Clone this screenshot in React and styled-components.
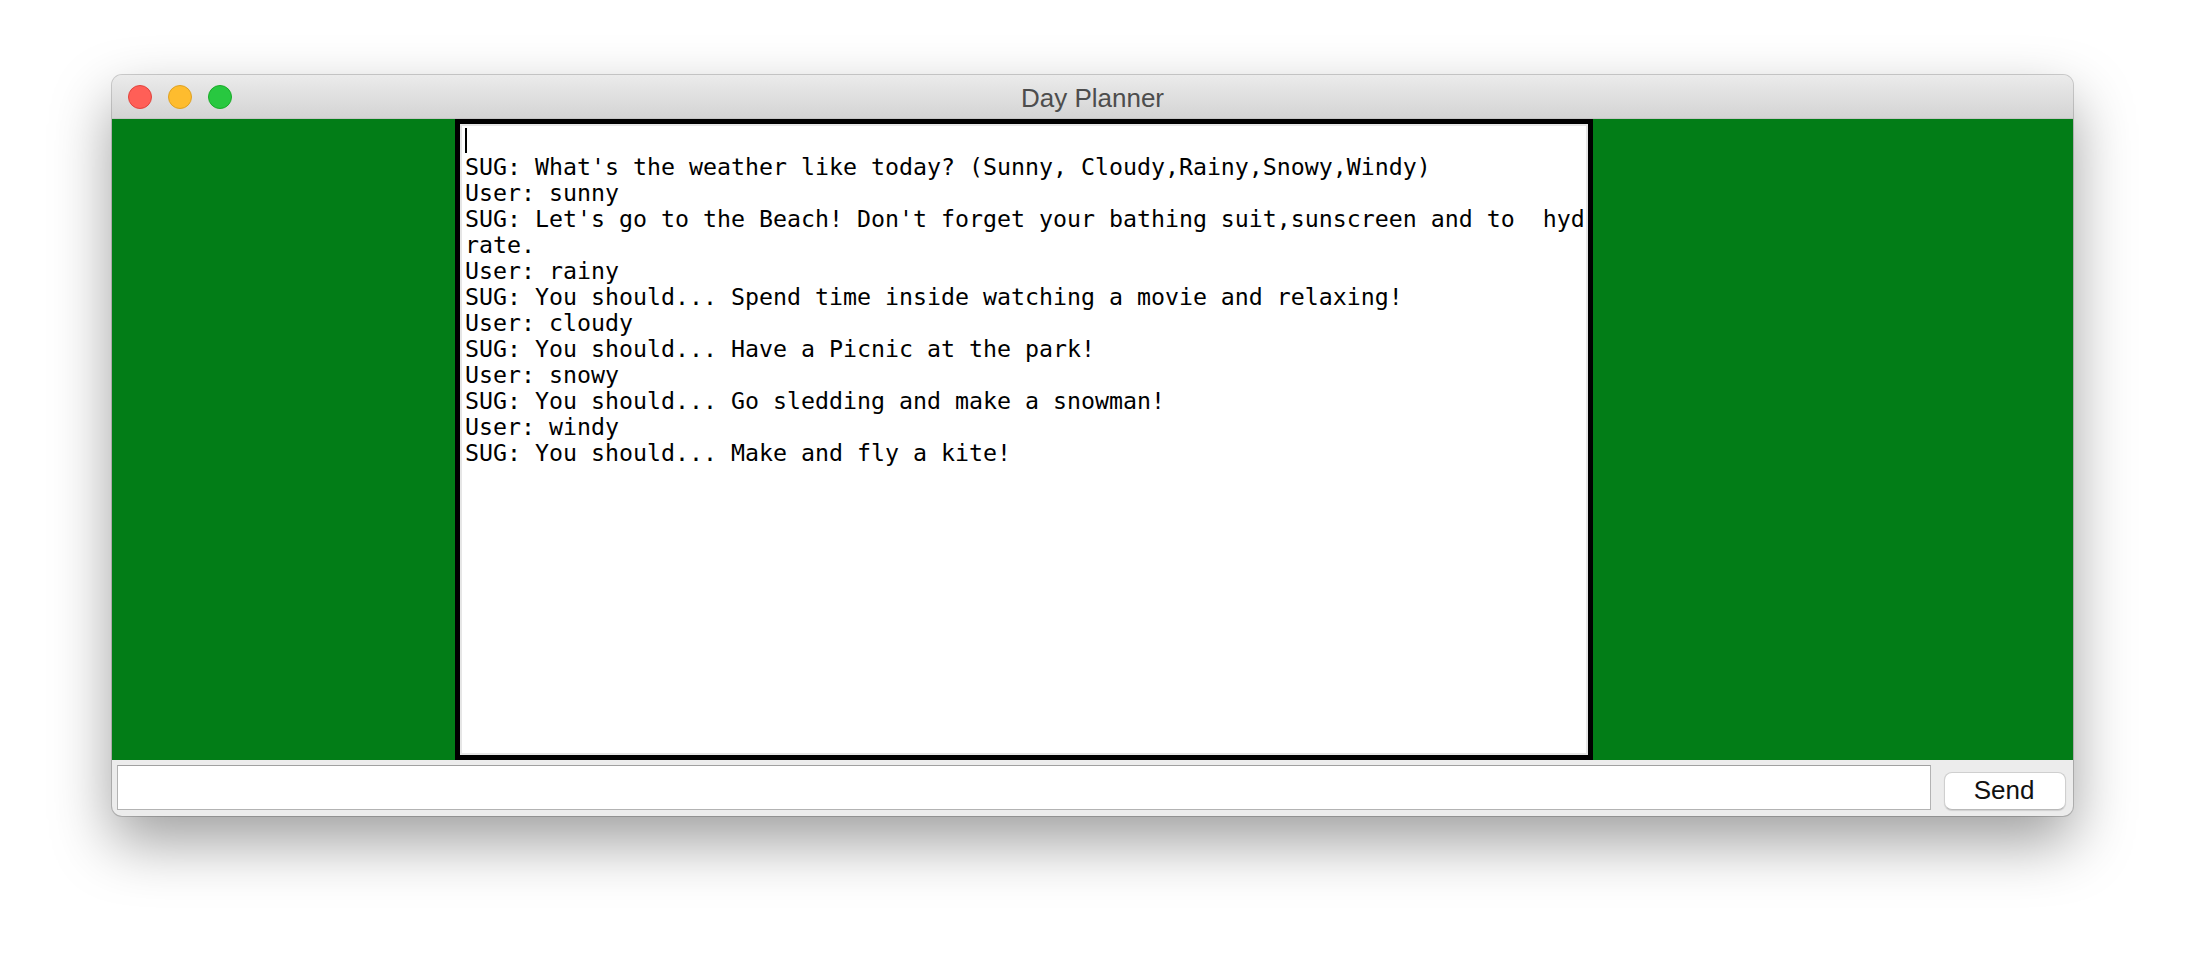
import styled, { createGlobalStyle } from "styled-components";

const GlobalStyle = createGlobalStyle`
  html, body {
    margin: 0;
    padding: 0;
    background: #ffffff;
  }
  body {
    font-family: "Liberation Sans", Arial, sans-serif;
  }
`;

const Desktop = styled.div`
  padding: 75px 0 0 112px;
  height: 964px;
  box-sizing: border-box;
`;

const Window = styled.div`
  width: 1961px;
  height: 741px;
  border-radius: 10px;
  overflow: hidden;
  display: flex;
  flex-direction: column;
  background: #ececec;
  box-shadow: 0 0 0 1px rgba(0, 0, 0, 0.18), 0 26px 60px rgba(0, 0, 0, 0.38);
`;

const TitleBar = styled.div`
  height: 44px;
  flex: none;
  display: grid;
  grid-template-columns: 1fr auto 1fr;
  align-items: center;
  background: linear-gradient(#ebebeb, #d4d4d4);
  border-bottom: 1px solid #c4c4c4;
  box-sizing: border-box;
`;

const Lights = styled.div`
  display: flex;
  gap: 16px;
  padding-left: 16px;
`;

const Light = styled.span`
  width: 24px;
  height: 24px;
  border-radius: 50%;
  box-sizing: border-box;
  background: ${(p) => p.$fill};
  border: 1px solid ${(p) => p.$edge};
`;

const Title = styled.div`
  font-size: 26px;
  color: #4d4d4d;
  padding-top: 4px;
`;

const Stage = styled.div`
  flex: 1;
  background: #027d17;
  padding-left: 343px;
  display: flex;
`;

const ChatBox = styled.div`
  width: 1138px;
  box-sizing: border-box;
  border: 5px solid #000;
  background: #fff;
  box-shadow: inset 0 0 0 2px #e6e6e6;
  padding: 4px 0 0 5px;
  font-family: "DejaVu Sans Mono", "Liberation Mono", monospace;
  font-size: 23.25px;
  line-height: 26px;
  color: #000;
  white-space: pre;
  overflow: hidden;
`;

const Line = styled.div`
  height: 26px;
`;

const Caret = styled.span`
  display: inline-block;
  width: 2px;
  height: 25px;
  background: #000;
  vertical-align: top;
`;

const InputBar = styled.div`
  height: 56px;
  flex: none;
  display: flex;
  align-items: flex-end;
  padding: 0 7px 6px 5px;
  gap: 13px;
  box-sizing: border-box;
`;

const Field = styled.input`
  flex: 1;
  height: 45px;
  box-sizing: border-box;
  border: 1px solid #b3b3b3;
  border-top-color: #a0a0a0;
  background: #fff;
  outline: none;
  font-size: 22px;
  padding: 0 8px;
`;

const SendButton = styled.button`
  width: 122px;
  height: 38px;
  border: 1px solid #cfcfcf;
  border-bottom-color: #b9b9b9;
  border-radius: 8px;
  background: #fff;
  box-shadow: 0 1px 1px rgba(0, 0, 0, 0.12);
  font-family: "Liberation Sans", Arial, sans-serif;
  font-size: 26px;
  color: #111;
  padding: 0 2px 2px 0;
`;

const lines = [
  "SUG: What's the weather like today? (Sunny, Cloudy,Rainy,Snowy,Windy)",
  "User: sunny",
  "SUG: Let's go to the Beach! Don't forget your bathing suit,sunscreen and to  hyd",
  "rate.",
  "User: rainy",
  "SUG: You should... Spend time inside watching a movie and relaxing!",
  "User: cloudy",
  "SUG: You should... Have a Picnic at the park!",
  "User: snowy",
  "SUG: You should... Go sledding and make a snowman!",
  "User: windy",
  "SUG: You should... Make and fly a kite!",
];

export default function App() {
  return (
    <>
      <GlobalStyle />
      <Desktop>
        <Window>
          <TitleBar>
            <Lights>
              <Light $fill="#ff5f57" $edge="#e0443e" />
              <Light $fill="#febc2e" $edge="#dea123" />
              <Light $fill="#28c840" $edge="#1aab29" />
            </Lights>
            <Title>Day Planner</Title>
            <div />
          </TitleBar>
          <Stage>
            <ChatBox>
              <Line>
                <Caret />
              </Line>
              {lines.map((l, i) => (
                <Line key={i}>{l}</Line>
              ))}
            </ChatBox>
          </Stage>
          <InputBar>
            <Field />
            <SendButton>Send</SendButton>
          </InputBar>
        </Window>
      </Desktop>
    </>
  );
}
